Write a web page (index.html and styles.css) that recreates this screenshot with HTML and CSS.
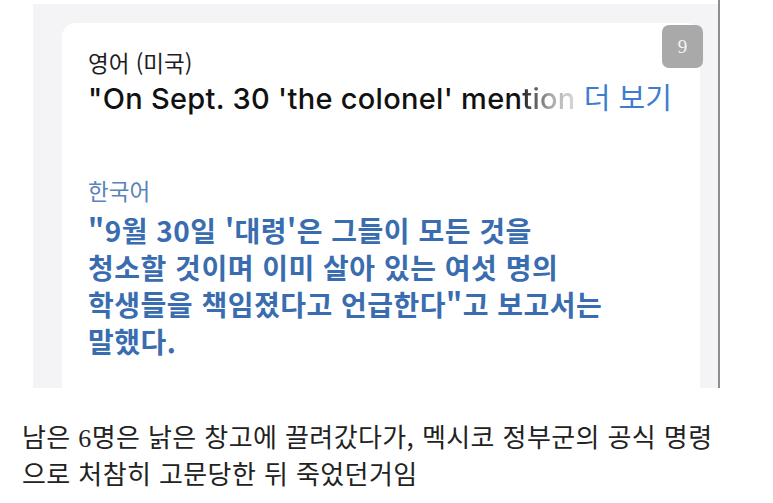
FILE: index.html
```html
<!DOCTYPE html>
<html lang="ko">
<head>
<meta charset="utf-8">
<title>번역</title>
<link rel="stylesheet" href="styles.css">
</head>
<body>
  <div class="frame">
    <div class="panel">
      <div class="card">
        <div class="badge">9</div>
        <div class="lang">영어 (미국)</div>
        <div class="source">"On Sept. 30 'the colonel' men<span class="fade">tion</span> <span class="more">더 보기</span></div>
        <div class="lang lang-ko">한국어</div>
        <p class="target">"9월 30일 '대령'은 그들이 모든 것을<br>청소할 것이며 이미 살아 있는 여섯 명의<br>학생들을 책임졌다고 언급한다"고 보고서는<br>말했다.</p>
      </div>
    </div>
  </div>
  <p class="caption">남은 <span class="num">6</span>명은 낡은 창고에 끌려갔다가, 멕시코 정부군의 공식 명령<br>으로 처참히 고문당한 뒤 죽었던거임</p>
</body>
</html>
```
FILE: styles.css
```css
html, body {
  margin: 0;
  padding: 0;
  background: #ffffff;
}

body {
  width: 773px;
  height: 503px;
  overflow: hidden;
  font-family: "Noto Sans CJK KR", "Noto Sans", sans-serif;
}

.frame {
  width: 685px;
  margin-left: 33px;
  padding-top: 4px;
  border-right: 2px solid #8e8e8e;
}

.panel {
  height: 384px;
  box-sizing: border-box;
  background: #f4f4f6;
  padding: 19px 18px 0 29px;
}

.card {
  position: relative;
  height: 365px;
  box-sizing: border-box;
  background: #ffffff;
  border-radius: 14px 14px 0 0;
  padding: 27px 0 0 26px;
}

.badge {
  position: absolute;
  top: 2px;
  right: -3px;
  width: 41px;
  height: 43px;
  border-radius: 7px;
  background: #a9a9a9;
  color: #f4f4f4;
  font-family: "Liberation Serif", serif;
  font-size: 19px;
  line-height: 43px;
  text-align: center;
}

.lang {
  font-size: 22.5px;
  line-height: 24px;
  color: #1d1d1f;
}

.source {
  margin-top: 7px;
  font-family: "Inter", "Noto Sans CJK KR", sans-serif;
  font-weight: 500;
  font-size: 29px;
  line-height: 30px;
  color: #111111;
  white-space: nowrap;
  letter-spacing: 0.3px;
}

.fade {
  background: linear-gradient(90deg, #222 0%, #aaa 55%, #dcdcdc 100%);
  -webkit-background-clip: text;
  background-clip: text;
  color: transparent;
}

.more {
  font-family: "Noto Sans CJK KR", sans-serif;
  font-weight: 400;
  font-size: 29px;
  letter-spacing: 0;
  color: #3c7dd0;
}

.lang-ko {
  margin-top: 64px;
  color: #5a83ba;
}

.target {
  margin: 10px 0 0;
  font-size: 28px;
  font-weight: 700;
  line-height: 37px;
  color: #3a6cb0;
  letter-spacing: 0.5px;
}

.caption {
  margin: 31px 0 0 22px;
  font-size: 26px;
  font-weight: 400;
  line-height: 34px;
  color: #222222;
  white-space: nowrap;
  letter-spacing: 0.4px;
}

.num {
  font-family: "Liberation Serif", serif;
}
```
